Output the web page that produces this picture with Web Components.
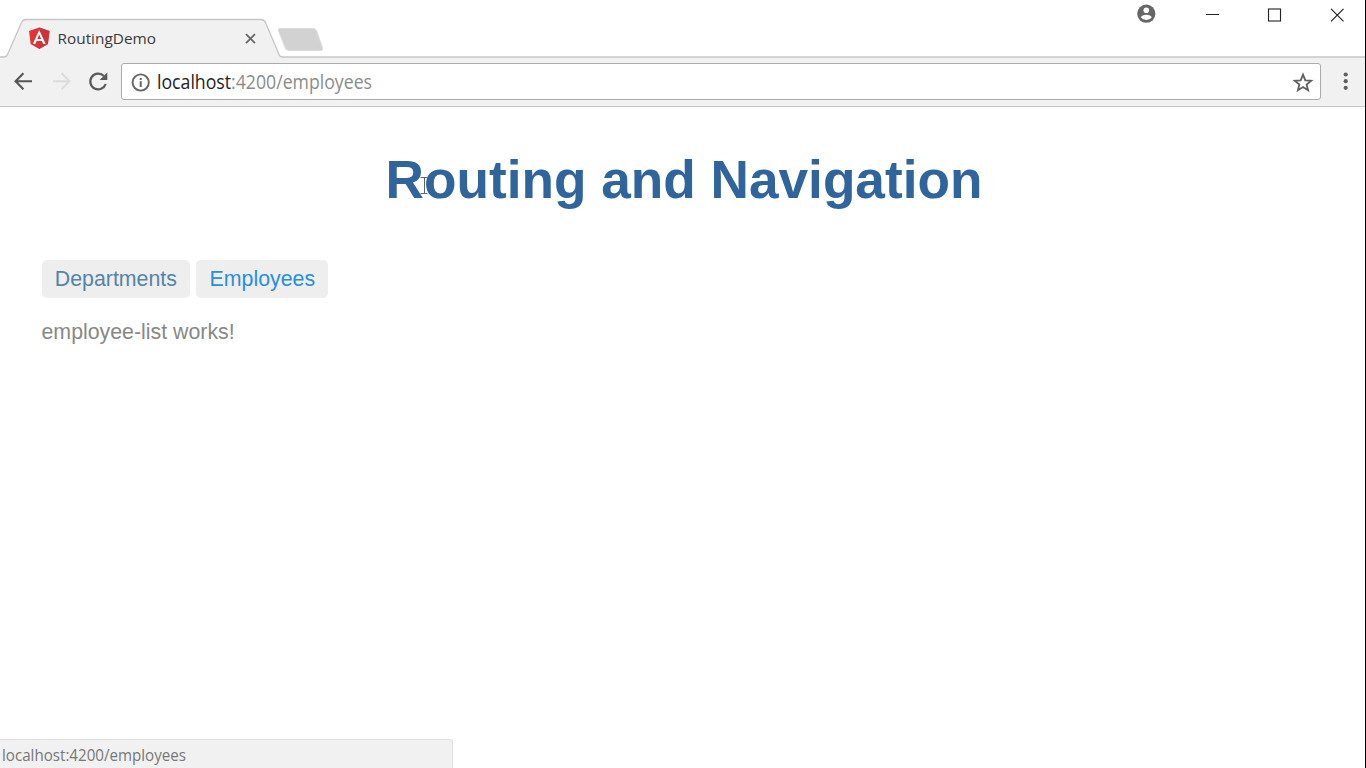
<!DOCTYPE html>
<html lang="en">
<head>
<meta charset="utf-8">
<title>RoutingDemo</title>
<style>
html,body{margin:0;height:100%;overflow:hidden;background:#fff}
</style>
</head>
<body>
<browser-window></browser-window>
<script>
function define(name, css, html) {
  customElements.define(name, class extends HTMLElement {
    constructor() {
      super();
      this.attachShadow({ mode: 'open' }).innerHTML = '<style>' + css + '</style>' + html;
    }
  });
}

define('tab-strip', `
:host{display:flex;height:58px;flex:none;background:#fff;justify-content:space-between}
svg{display:block;flex:none}
text{font-family:"Open Sans","Noto Sans",sans-serif;font-size:15.300px;fill:#3a3a3a}
`, `
<svg width="340" height="58" viewBox="0 0 340 58">
  <path d="M0 57H4Q6.500 57 7.500 54.500L21.500 22.500Q23 19.500 25.500 19.500H261Q264 19.500 265.500 22.500L279 54.500Q280 57 282.500 57H340V58H0Z" fill="#f1f1f1"/>
  <path d="M0 57H4Q6.500 57 7.500 54.500L21.500 22.500Q23 19.500 25.500 19.500H261Q264 19.500 265.500 22.500L279 54.500Q280 57 282.500 57H340" fill="none" stroke="#c6c6c6" stroke-width="1.300"/>
  <path d="M279.500 28.500H313Q315.500 28.500 316.500 30.500L322.500 47.500Q323.300 50.500 321 50.500H289Q286.500 50.500 285.500 48.500L278.500 31Q277.500 28.500 279.500 28.500Z" fill="#d2d2d2" stroke="#dddddd"/>
  <path d="M39.200 27.500L49.500 31L47.900 44L39.200 49L30.700 44L29 31Z" fill="#e23237"/>
  <path d="M39.200 27.500L49.500 31L47.900 44L39.200 49Z" fill="#c9353a"/>
  <path d="M39.200 30L32.800 44H35.300L36.600 40.900H41.900L43.200 44H45.700ZM39.200 34.400L41.100 38.900H37.400Z" fill="#fff" fill-rule="evenodd"/>
  <text x="57.500" y="43.500" textLength="98.500" lengthAdjust="spacingAndGlyphs">RoutingDemo</text>
  <path d="M246 34.200L255 43.200M255 34.200L246 43.200" stroke="#666" stroke-width="1.700"/>
</svg>
<svg style="flex:1;min-width:0" height="58"><path d="M0 57.500H1000" stroke="#f1f1f1"/><path d="M0 57H1000" stroke="#c6c6c6" stroke-width="1.300"/></svg>
<svg width="255" height="58" viewBox="1110 0 255 58">
  <path d="M1110 57.500H1366" stroke="#f1f1f1"/>
  <path d="M1110 57H1366" stroke="#c6c6c6" stroke-width="1.300"/>
  <circle cx="1146.300" cy="13.700" r="9.100" fill="#666"/>
  <circle cx="1146.300" cy="10.300" r="2.800" fill="#fff"/>
  <path d="M1140.800 17.200Q1142 14.700 1146.300 14.700Q1150.600 14.700 1151.800 17.200Q1149.800 20.100 1146.300 20.100Q1142.800 20.100 1140.800 17.200Z" fill="#fff"/>
  <path d="M1206 14.500H1219" stroke="#222"/>
  <rect x="1268.500" y="9" width="12" height="12" fill="none" stroke="#222" stroke-width="1.100"/>
  <path d="M1331 8.800L1343.500 21.300M1343.500 8.800L1331 21.300" stroke="#222" stroke-width="1.200"/>
</svg>`);

define('address-bar', `
:host{display:flex;box-sizing:border-box;height:37px;border:1px solid #ababab;border-radius:3px;background:#fff;justify-content:space-between}
svg{display:block}
text{font-family:"Open Sans","Noto Sans",sans-serif;font-size:19.500px;fill:#8b8b8b}
`, `
<svg width="280" height="35" viewBox="122.500 64 280 35">
  <circle cx="141.200" cy="82.500" r="8.100" fill="none" stroke="#666" stroke-width="1.900"/>
  <path d="M141.200 81.200V87" stroke="#666" stroke-width="2"/>
  <rect x="140.200" y="78" width="2" height="2" fill="#666"/>
  <text x="157.500" y="89" textLength="215" lengthAdjust="spacingAndGlyphs"><tspan fill="#222">localhost</tspan>:4200/employees</text>
</svg>
<svg width="40" height="35" viewBox="1280 64 40 35">
  <path d="M1303 74.700L1305.300 80.300L1311.200 80.700L1306.600 84.500L1308.100 90.300L1303 87.100L1297.900 90.300L1299.400 84.500L1294.800 80.700L1300.700 80.300Z" fill="none" stroke="#5f5f5f" stroke-width="1.800"/>
</svg>`);

define('nav-toolbar', `
:host{display:flex;box-sizing:border-box;height:48.500px;flex:none;background:#f1f1f1;border-bottom:1px solid #c6c6c6;padding-top:5px}
svg{display:block;flex:none}
address-bar{flex:1}
`, `
<svg width="121" height="37" viewBox="0 63 121 37" fill="none">
  <path d="M32 81.200H16M23.400 73.200L15.600 81.200L23.400 89.200" stroke="#555" stroke-width="2.100"/>
  <path d="M53 81.200H69M61.600 73.200L69.400 81.200L61.600 89.200" stroke="#dcdcdc" stroke-width="2.100"/>
  <path d="M103.900 76A7.900 7.900 0 1 0 105.700 84" stroke="#5a5a5a" stroke-width="2.200"/>
  <path d="M107.300 72.400V80.100H99.600Z" fill="#5a5a5a"/>
</svg>
<address-bar></address-bar>
<svg width="44" height="37" viewBox="1321 63 44 37" fill="#5f5f5f">
  <circle cx="1345.700" cy="74.500" r="2.100"/><circle cx="1345.700" cy="81.200" r="2.100"/><circle cx="1345.700" cy="87.800" r="2.100"/>
</svg>`);

define('nav-link', `
:host{display:block;box-sizing:border-box;height:38px;padding:0 13.330px;border-radius:5px;background:#eee;color:#5485a5;font-size:21.330px;line-height:38px;white-space:nowrap}
:host([active]){color:#2a8fdc}
`, `<slot></slot>`);

define('routing-page', `
:host{display:flex;flex-direction:column;flex:1;min-height:0;padding:0 41.500px;font-family:"Liberation Sans",Arial,sans-serif}
h1{margin:41.500px 0 0;padding-left:3px;height:64px;line-height:64px;font-size:53.200px;font-weight:bold;color:#2f659c;text-align:center;white-space:nowrap}
nav{display:flex;gap:6px;margin-top:48px}
p{margin:22px 0 0;font-size:21.330px;line-height:24px;color:#888}
`, `
<h1>Routing and Navigation</h1>
<nav><nav-link>Departments</nav-link><nav-link active>Employees</nav-link></nav>
<p>employee-list works!</p>`);

define('status-bubble', `
:host{display:block;box-sizing:border-box;width:453px;height:29px;background:#f1f1f1;border:1px solid #e0e0e0;border-left:0;border-bottom:0;border-top-right-radius:4px}
svg{display:block}
text{font-family:"Open Sans","Noto Sans",sans-serif;font-size:15.800px;fill:#777}
`, `<svg width="450" height="28"><text x="2" y="20.500" textLength="184" lengthAdjust="spacingAndGlyphs">localhost:4200/employees</text></svg>`);

define('browser-window', `
:host{display:flex;flex-direction:column;box-sizing:border-box;width:1366px;height:768px;position:relative;border-right:1px solid #000;background:#fff;overflow:hidden}
status-bubble{position:absolute;left:0;bottom:0}
.cursor{position:absolute;left:419px;top:176px}
`, `
<tab-strip></tab-strip><nav-toolbar></nav-toolbar><routing-page></routing-page>
<status-bubble></status-bubble>
<svg class="cursor" width="10" height="19" viewBox="0 0 10 19" fill="none" stroke="#5b6470" stroke-width="1"><path d="M1.500 1.500H8.500M5.500 1.500V17.500M1.500 17.500H8.500"/></svg>`);
</script>
</body>
</html>
